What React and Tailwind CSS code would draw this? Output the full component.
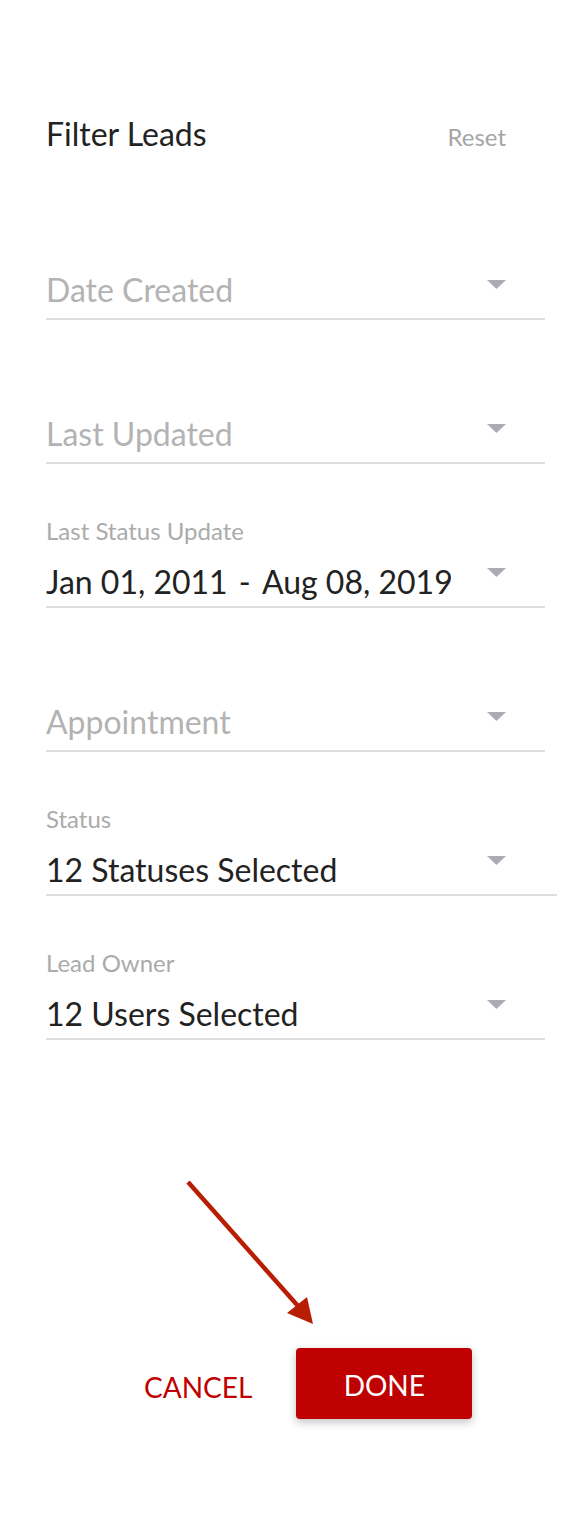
import React from 'react';

const font = { fontFamily: 'Lato, "Open Sans", sans-serif' };

function Caret() {
  return (
    <svg className="w-[19px] h-[9px] shrink-0" viewBox="0 0 19 9">
      <path d="M0 0h19L9.5 9z" fill="#a9adb1" />
    </svg>
  );
}

function Field({ label, value, wide }) {
  const empty = !label;
  return (
    <div
      className={`h-[144px] flex flex-col justify-end border-b-2 border-[#dedede] ${
        wide ? '-mr-[12px]' : ''
      }`}
    >
      {label && (
        <div className="text-[24px] leading-[28px] text-[#ababab] mb-[17px]">{label}</div>
      )}
      <div
        className={`flex justify-between items-start ${empty ? 'pb-[8px]' : 'pb-[4px]'}`}
      >
        <div
          className={`text-[32px] leading-[40px] whitespace-pre ${
            empty ? 'text-[#b3b3b3]' : 'text-[#222222]'
          }`}
        >
          {value}
        </div>
        <div className={`${empty ? 'mt-[10px]' : 'mt-[6px]'} ${wide ? 'mr-[51px]' : 'mr-[39px]'}`}>
          <Caret />
        </div>
      </div>
    </div>
  );
}

export default function App() {
  const range = (
    <>
      <span>Jan 01, 2011</span>
      <span className="mx-[3px]"> - </span>
      <span>Aug 08, 2019</span>
    </>
  );

  return (
    <div className="relative min-h-[1532px] bg-white pl-[46px] pr-[41px]" style={font}>
      {/* Header */}
      <div className="h-[176px] pt-[114px] flex items-baseline justify-between">
        <h1 className="text-[32px] leading-[40px] text-[#222222]">Filter Leads</h1>
        <button className="mr-[39px] text-[24px] leading-[40px] text-[#a6a6a6]">Reset</button>
      </div>

      {/* Fields */}
      <Field value="Date Created" />
      <Field value="Last Updated" />
      <Field label="Last Status Update" value={range} />
      <Field value="Appointment" />
      <Field label="Status" value="12 Statuses Selected" wide />
      <Field label="Lead Owner" value="12 Users Selected" />

      {/* Actions */}
      <div className="mt-[308px] flex items-center pl-[98px]">
        <button className="mt-[6px] text-[28px] leading-[40px] text-[#c00000]">CANCEL</button>
        <button className="ml-[44px] w-[176px] h-[71px] pt-[2px] rounded-[4px] bg-[#bf0000] text-white text-[28px] shadow-[0_3px_8px_rgba(0,0,0,0.25)]">
          DONE
        </button>
      </div>

      {/* Annotation arrow */}
      <svg
        className="absolute left-[180px] top-[1175px] w-[145px] h-[160px]"
        viewBox="0 0 145 160"
      >
        <line x1="8" y1="7" x2="118" y2="131" stroke="#b81e04" strokeWidth="4.5" />
        <path d="M133 149 L107 138 L127 122 Z" fill="#b81e04" />
      </svg>
    </div>
  );
}
